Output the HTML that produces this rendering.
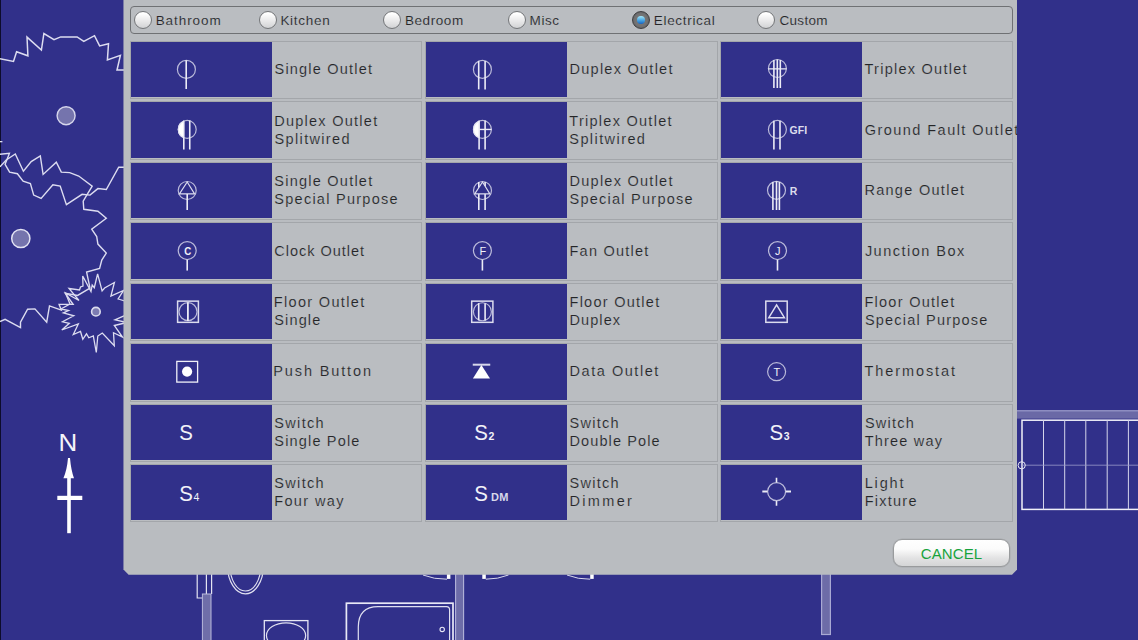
<!DOCTYPE html>
<html lang="en"><head><meta charset="utf-8"><title>Electrical symbols</title>
<style>

html,body{margin:0;padding:0}
body{width:1138px;height:640px;overflow:hidden;position:relative;background:#31308a;
 font-family:"Liberation Sans",sans-serif;}
#bg{position:absolute;left:0;top:0;width:1138px;height:640px;display:block}
#dlg{position:absolute;left:123px;top:-12px;width:894.2px;height:586.7px;background:#b9bcc0;
 clip-path:polygon(.45px 0,100% 0,100% calc(100% - 5.2px),calc(100% - 5.2px) 100%,5.6px 100%,.45px calc(100% - 5.2px));}
#in{position:absolute;left:-123px;top:12px;width:1138px;height:640px}
#tabs{position:absolute;left:130px;top:6px;width:881px;height:26px;border:1px solid #6f7174;border-radius:4px;
 background:#babdc1}
.rb{position:absolute;top:3.5px;width:16.4px;height:16.4px;border-radius:50%;border:1px solid #747679;
 background:linear-gradient(#ffffff 10%,#e9e9ea 55%,#d2d3d5);}
.rb.on{border-color:#3e3e40;background:radial-gradient(circle at 50% 50%,#7c7c7d 0,#727273 55%,#525254 100%)}
.rb.on i{position:absolute;left:4.4px;top:4.4px;width:7.8px;height:7.8px;border-radius:50%;
 background:linear-gradient(#a6e8f8,#3e9de0 60%,#1a63c0)}
.rl{position:absolute;top:6px;font-size:13.5px;line-height:16px;color:#242527;white-space:nowrap;-webkit-text-stroke:.15px #babdc1}
.cell{position:absolute;border:1px solid #a3a6aa;background:#babdc1;box-sizing:content-box}
.cell svg{position:absolute;left:0;top:0;display:block;background:#31308a}
.cell span{position:absolute;font-size:14.5px;line-height:18px;color:#242527;white-space:nowrap;-webkit-text-stroke:.18px #babdc1}
#cancel{position:absolute;left:893px;top:539px;width:115px;height:26px;border:1px solid #999b9d;border-radius:9px;
 background:linear-gradient(#ffffff 0,#fbfbfb 35%,#e2e2e3 70%,#d4d5d6 100%);color:#17a33c;font-size:15px;line-height:27px;
 text-align:center;letter-spacing:.1px;box-shadow:0 0 0 .5px rgba(120,120,120,.25)}

</style></head><body>
<svg id="bg" width="1138" height="640" viewBox="0 0 1138 640">
<rect x="0" y="0" width="1" height="640" fill="#0d0c2c"/>
<rect x="0" y="141" width="2.4" height="1.3" fill="#e0e0f0"/>
<polyline points="0,58.8 13.5,61.4 16.6,51.7 27.9,55.8 27,37.1 41.4,50.1 43.9,33.5 54,39.7 60.7,36.9 77.1,36.9 83.8,41.4 94.5,35.7 99.6,45.9 108.5,43.8 107.4,59.9 120.4,55.4 117,70.1 124,70.1" fill="none" stroke="#dcdcf0" stroke-width="1.5" stroke-linejoin="miter" stroke-linecap="butt" opacity="1"/>
<polyline points="0,166.9 6.2,160 15.3,154 23.4,171.2 31.2,161.6 40.3,155.9 43.1,174.4 56.3,162.2 61.3,172.1 69.7,172.6 78.7,176 92.2,186.1 86.6,195.3 83.2,201.2 83.8,209.3 97.9,211.2 106.3,218.3 91.7,229.2 96.7,236.5 97.9,244.1 106.3,253.1 101.8,260 99.6,268.4 86.6,272.1 90,288.2 77.6,295.4 65.2,293.2 73.1,304.4 59.1,304.4 61.3,310.1 49.5,305.9 46.7,322.2 34.9,308.9 27.6,309.2 20.5,322.1 20.5,327.5 5.1,319.3 0,321.6" fill="none" stroke="#dcdcf0" stroke-width="1.4" stroke-linejoin="miter" stroke-linecap="butt" opacity="1"/>
<polyline points="0,154.2 9.4,153.4 5.6,163.1 5.1,164.4 9.6,172.1 17.4,173.7 23.1,181.1 30.4,183.6 33.7,195.1 41.1,198.5 52.9,184.8 60.2,186.1 66.4,204.7 82.1,194.3 90,195.1 97.9,188.6 106.3,189.5 118.7,167.2 124,167.2" fill="none" stroke="#dcdcf0" stroke-width="1.4" stroke-linejoin="miter" stroke-linecap="butt" opacity="1"/>
<circle cx="66.1" cy="115.7" r="9" fill="#7574ad" stroke="#d6d6ec" stroke-width="1.4"/>
<circle cx="20.8" cy="238.5" r="9.1" fill="#7574ad" stroke="#e2e2f2" stroke-width="1.5"/>
<polygon points="97.6,273.9 102.1,290.9 104.6,288 114.4,282.5 110.9,296.2 123.5,290.5 118.1,299 128,302 128,314 115,319.8 127,322.5 114.3,325.5 122.5,337 113.5,332.7 114.3,345.8 102.3,333 97.8,336 96.3,352.5 93.3,336 88.8,337.8 86.5,333.8 82.8,339.3 80.5,331.5 73.3,334.5 78.3,324 61.8,330 69.3,323.3 62.5,321.8 73.8,315.8 63.3,312.8 68.5,310.5 61,309 70,304 65.5,293 79,300.5 69,288.5 79.5,290 80.5,287 83,286 82.7,276 91,291.6 92.2,285 94.3,287.7" fill="none" stroke="#dcdcf0" stroke-width="1.3" stroke-linejoin="miter" stroke-linecap="butt" opacity="1"/>
<circle cx="95.9" cy="311.7" r="4.3" fill="#7c7bb2" stroke="#dcdcee" stroke-width="1.6"/>
<text x="58.6" y="450.8" font-family="Liberation Sans, sans-serif" font-size="23.5" fill="#f4f4fa" textLength="18.75" lengthAdjust="spacingAndGlyphs">N</text>
<rect x="67.2" y="474" width="3.6" height="59.2" fill="#ffffff"/>
<path d="M68 458 L70 458 Q71 470 74 478.2 L63.4 478.2 Q67 470 68 458 Z" fill="#ffffff"/>
<rect x="57.3" y="495.8" width="25" height="4.2" fill="#ffffff"/>
<path d="M197.2 570 V598 H202.4 M206.4 570 V594 M211.6 570 V594" fill="none" stroke="#e4e4f2" stroke-width="1.2"/>
<rect x="202.4" y="594" width="8.6" height="50" fill="#6f6ea9" stroke="#b9b9dc" stroke-width="1"/>
<ellipse cx="245.5" cy="566" rx="17.9" ry="27.8" fill="none" stroke="#e0e0f0" stroke-width="1.2"/>
<ellipse cx="245.4" cy="566" rx="15.4" ry="25" fill="none" stroke="#e0e0f0" stroke-width="1.1"/>
<rect x="264.3" y="620.6" width="43.6" height="30" fill="none" stroke="#e6e6f4" stroke-width="1.3"/>
 <ellipse cx="286.05" cy="635.6" rx="19.6" ry="12.7" fill="none" stroke="#e0e0f0" stroke-width="1.2"/>
<rect x="346.4" y="603.2" width="106.6" height="50" fill="none" stroke="#e8e8f6" stroke-width="1.7"/>
<path d="M358.3 650 V627 Q358.3 606.6 378 606.6 H446.5 Q449.6 606.6 449.6 610 V650" fill="none" stroke="#e0e0f0" stroke-width="1.2"/>
<circle cx="442.2" cy="629.4" r="2.2" fill="none" stroke="#e8e8f6" stroke-width="1.1"/>
<rect x="455.6" y="570" width="8" height="80" fill="#6d6ca8" stroke="#b4b4da" stroke-width="1.1"/>
<path d="M423 575 Q434 579.4 447 579.2" fill="none" stroke="#d8d8ec" stroke-width="1"/>
<rect x="446.9" y="570" width="3.5" height="8.9" fill="#ffffff"/>
<rect x="482.3" y="570" width="3.5" height="8.9" fill="#ffffff"/>
<path d="M485.8 579.2 Q498 579.2 508.5 575" fill="none" stroke="#d8d8ec" stroke-width="1"/>
<path d="M567 575 Q578 579.4 590.2 579.2" fill="none" stroke="#d8d8ec" stroke-width="1"/>
<rect x="590.2" y="570" width="3.5" height="8.9" fill="#ffffff"/>
<rect x="821.6" y="570" width="8.8" height="64.5" fill="#6d6ca8" stroke="#a9a9d4" stroke-width="1.2"/>
<rect x="1010" y="410.2" width="130" height="8.4" fill="#6a69a6"/>
<rect x="1010" y="410.2" width="130" height="1.2" fill="#9a9aca"/>
<rect x="1022" y="420.2" width="120" height="89.2" fill="none" stroke="#f0f0f8" stroke-width="1.5"/>
<line x1="1043.5" y1="420" x2="1043.5" y2="509.4" stroke="#d4d4ea" stroke-width="1"/>
<line x1="1064.7" y1="420" x2="1064.7" y2="509.4" stroke="#d4d4ea" stroke-width="1"/>
<line x1="1085.8" y1="420" x2="1085.8" y2="509.4" stroke="#d4d4ea" stroke-width="1"/>
<line x1="1107.2" y1="420" x2="1107.2" y2="509.4" stroke="#d4d4ea" stroke-width="1"/>
<line x1="1128.4" y1="420" x2="1128.4" y2="509.4" stroke="#d4d4ea" stroke-width="1"/>
<line x1="1022" y1="465.2" x2="1138" y2="465.2" stroke="#9c9cca" stroke-width=".8"/>
<circle cx="1021.7" cy="465.3" r="3.6" fill="none" stroke="#e6e6f4" stroke-width="1"/>
</svg>
<div id="dlg"><div id="in">
<div id="tabs">
<div class="rb" style="left:3px"></div>
<div class="rl" style="left:24.7px;letter-spacing:0.93px">Bathroom</div>
<div class="rb" style="left:127.9px"></div>
<div class="rl" style="left:149.4px;letter-spacing:0.71px">Kitchen</div>
<div class="rb" style="left:252px"></div>
<div class="rl" style="left:273.9px;letter-spacing:0.59px">Bedroom</div>
<div class="rb" style="left:376.5px"></div>
<div class="rl" style="left:398.6px;letter-spacing:0.54px">Misc</div>
<div class="rb on" style="left:501.1px"><i></i></div>
<div class="rl" style="left:522.8px;letter-spacing:0.68px">Electrical</div>
<div class="rb" style="left:625.6px"></div>
<div class="rl" style="left:648.5px;letter-spacing:0.29px">Custom</div>
</div>
<div class="cell" style="left:130px;top:41px;width:290px;height:56.4px">
<svg width="141" height="55.4" viewBox="131 42.1 141 55.4">
<circle cx="186.4" cy="69.5" r="9" fill="none" stroke="#dcdcee" stroke-width="1.2" opacity=".8"/>
<line x1="186.2" y1="60.3" x2="186.2" y2="89" stroke="#ececf6" stroke-width="1.6"/>
</svg>
<span style="left:143.5px;top:18.3px;letter-spacing:1.21px;word-spacing:0px">Single Outlet</span>
</div>
<div class="cell" style="left:425px;top:41px;width:290.5px;height:56.4px">
<svg width="141" height="55.4" viewBox="426 42.1 141 55.4">
<circle cx="482.4" cy="69.5" r="9" fill="none" stroke="#dcdcee" stroke-width="1.2" opacity=".8"/>
<line x1="478.7" y1="61" x2="478.7" y2="89.5" stroke="#ececf6" stroke-width="1.6"/>
<line x1="485.1" y1="61" x2="485.1" y2="89.5" stroke="#ececf6" stroke-width="1.6"/>
</svg>
<span style="left:143.5px;top:18.3px;letter-spacing:1.26px;word-spacing:0px">Duplex Outlet</span>
</div>
<div class="cell" style="left:720px;top:41px;width:291px;height:56.4px">
<svg width="141" height="55.4" viewBox="721 42.1 141 55.4">
<circle cx="777.4" cy="68.6" r="9" fill="none" stroke="#dcdcee" stroke-width="1.2" opacity=".8"/>
<line x1="773.9" y1="60" x2="773.9" y2="88" stroke="#ececf6" stroke-width="1.6"/>
<line x1="777.3" y1="59.5" x2="777.3" y2="88" stroke="#ececf6" stroke-width="1.6"/>
<line x1="780.3" y1="60" x2="780.3" y2="88" stroke="#ececf6" stroke-width="1.6"/>
<line x1="768.2" y1="69" x2="786.6" y2="69" stroke="#ececf6" stroke-width="1.4"/>
</svg>
<span style="left:143.5px;top:18.3px;letter-spacing:1.26px;word-spacing:0px">Triplex Outlet</span>
</div>
<div class="cell" style="left:130px;top:101.44px;width:290px;height:56.4px">
<svg width="141" height="55.4" viewBox="131 102.54 141 55.4">
<path d="M184 121.16 A9.4 9.4 0 0 0 184 138.84 Z" fill="#ffffff"/>
<circle cx="187.2" cy="130" r="9" fill="none" stroke="#dcdcee" stroke-width="1.2" opacity=".8"/>
<line x1="183.8" y1="121.4" x2="183.8" y2="150" stroke="#ececf6" stroke-width="1.6"/>
<line x1="189.75" y1="121" x2="189.75" y2="150" stroke="#ececf6" stroke-width="1.6"/>
</svg>
<span style="left:143.2px;top:9.4px;letter-spacing:1.26px;word-spacing:0px">Duplex Outlet</span>
<span style="left:143.6px;top:27.2px;letter-spacing:1.34px;word-spacing:0px">Splitwired</span>
</div>
<div class="cell" style="left:425px;top:101.44px;width:290.5px;height:56.4px">
<svg width="141" height="55.4" viewBox="426 102.54 141 55.4">
<path d="M479.3 121.13 A9.4 9.4 0 0 0 479.3 138.87 Z" fill="#ffffff"/>
<circle cx="482.4" cy="130" r="9" fill="none" stroke="#dcdcee" stroke-width="1.2" opacity=".8"/>
<line x1="479.1" y1="121.4" x2="479.1" y2="150" stroke="#ececf6" stroke-width="1.6"/>
<line x1="485.1" y1="121" x2="485.1" y2="150" stroke="#ececf6" stroke-width="1.6"/>
<line x1="479.1" y1="130" x2="491.6" y2="130" stroke="#ececf6" stroke-width="1.4"/>
</svg>
<span style="left:143.3px;top:9.4px;letter-spacing:1.27px;word-spacing:0px">Triplex Outlet</span>
<span style="left:143.3px;top:27.2px;letter-spacing:1.42px;word-spacing:0px">Splitwired</span>
</div>
<div class="cell" style="left:720px;top:101.44px;width:291px;height:56.4px">
<svg width="141" height="55.4" viewBox="721 102.54 141 55.4">
<circle cx="777.4" cy="130" r="9" fill="none" stroke="#dcdcee" stroke-width="1.2" opacity=".8"/>
<line x1="773.9" y1="121.4" x2="773.9" y2="150" stroke="#ececf6" stroke-width="1.6"/>
<line x1="780" y1="121.4" x2="780" y2="150" stroke="#ececf6" stroke-width="1.6"/>
<text x="789.6" y="134.4" font-family="Liberation Sans, sans-serif" font-size="10.5" font-weight="bold" fill="#dcdcec" text-anchor="start">GFI</text>
</svg>
<span style="left:143.7px;top:18.3px;letter-spacing:1.46px;word-spacing:0px">Ground Fault Outlet</span>
</div>
<div class="cell" style="left:130px;top:161.88px;width:290px;height:56.4px">
<svg width="141" height="55.4" viewBox="131 162.98 141 55.4">
<circle cx="187.2" cy="190.5" r="9" fill="none" stroke="#dcdcee" stroke-width="1.2" opacity=".8"/>
<polygon points="187.2,182 179.4,193.9 194.6,193.9" fill="none" stroke="#dcdcee" stroke-width="1.2" stroke-linejoin="miter"/>
<line x1="187.2" y1="194" x2="187.2" y2="210" stroke="#ececf6" stroke-width="1.6"/>
</svg>
<span style="left:143.3px;top:9.4px;letter-spacing:1.24px;word-spacing:0px">Single Outlet</span>
<span style="left:143.3px;top:27.2px;letter-spacing:1.26px;word-spacing:0px">Special Purpose</span>
</div>
<div class="cell" style="left:425px;top:161.88px;width:290.5px;height:56.4px">
<svg width="141" height="55.4" viewBox="426 162.98 141 55.4">
<circle cx="482.5" cy="190.5" r="9" fill="none" stroke="#dcdcee" stroke-width="1.2" opacity=".8"/>
<line x1="478.8" y1="182" x2="478.8" y2="210" stroke="#ececf6" stroke-width="1.6"/>
<line x1="485.1" y1="182" x2="485.1" y2="210" stroke="#ececf6" stroke-width="1.6"/>
<polygon points="482.5,182 474.7,193.9 489.9,193.9" fill="#31308a" stroke="#dcdcee" stroke-width="1.2" stroke-linejoin="miter"/>
</svg>
<span style="left:143.5px;top:9.4px;letter-spacing:1.26px;word-spacing:0px">Duplex Outlet</span>
<span style="left:143.5px;top:27.2px;letter-spacing:1.25px;word-spacing:0px">Special Purpose</span>
</div>
<div class="cell" style="left:720px;top:161.88px;width:291px;height:56.4px">
<svg width="141" height="55.4" viewBox="721 162.98 141 55.4">
<circle cx="776.5" cy="190.3" r="9" fill="none" stroke="#dcdcee" stroke-width="1.2" opacity=".8"/>
<line x1="772.9" y1="182" x2="772.9" y2="210" stroke="#ececf6" stroke-width="1.6"/>
<line x1="776.5" y1="181.3" x2="776.5" y2="210" stroke="#ececf6" stroke-width="1.6"/>
<line x1="779.4" y1="182" x2="779.4" y2="210" stroke="#ececf6" stroke-width="1.6"/>
<text x="789.7" y="194.7" font-family="Liberation Sans, sans-serif" font-size="10.5" font-weight="bold" fill="#dcdcec" text-anchor="start">R</text>
</svg>
<span style="left:143.4px;top:18.3px;letter-spacing:1.29px;word-spacing:0px">Range Outlet</span>
</div>
<div class="cell" style="left:130px;top:222.32px;width:290px;height:56.4px">
<svg width="141" height="55.4" viewBox="131 223.42 141 55.4">
<circle cx="187.2" cy="251" r="9" fill="none" stroke="#dcdcee" stroke-width="1.2" opacity=".8"/>
<line x1="187.2" y1="260.2" x2="187.2" y2="271" stroke="#ececf6" stroke-width="1.6"/>
<text textLength="7" lengthAdjust="spacingAndGlyphs" x="187.7" y="255.2" font-family="Liberation Sans, sans-serif" font-size="11" font-weight="bold" fill="#f2f2f8" text-anchor="middle">C</text>
</svg>
<span style="left:143.3px;top:18.3px;letter-spacing:0.98px;word-spacing:0px">Clock Outlet</span>
</div>
<div class="cell" style="left:425px;top:222.32px;width:290.5px;height:56.4px">
<svg width="141" height="55.4" viewBox="426 223.42 141 55.4">
<circle cx="482.4" cy="251" r="9" fill="none" stroke="#dcdcee" stroke-width="1.2" opacity=".8"/>
<line x1="482.4" y1="260.2" x2="482.4" y2="271" stroke="#ececf6" stroke-width="1.6"/>
<text x="482.8" y="255" font-family="Liberation Sans, sans-serif" font-size="11" font-weight="normal" fill="#f2f2f8" text-anchor="middle">F</text>
</svg>
<span style="left:143.5px;top:18.3px;letter-spacing:1.24px;word-spacing:0px">Fan Outlet</span>
</div>
<div class="cell" style="left:720px;top:222.32px;width:291px;height:56.4px">
<svg width="141" height="55.4" viewBox="721 223.42 141 55.4">
<circle cx="777.5" cy="251" r="9" fill="none" stroke="#dcdcee" stroke-width="1.2" opacity=".8"/>
<line x1="777.5" y1="260.2" x2="777.5" y2="271" stroke="#ececf6" stroke-width="1.6"/>
<text x="777.8" y="255" font-family="Liberation Sans, sans-serif" font-size="11" font-weight="normal" fill="#f2f2f8" text-anchor="middle">J</text>
</svg>
<span style="left:143.9px;top:18.3px;letter-spacing:1.48px;word-spacing:0px">Junction Box</span>
</div>
<div class="cell" style="left:130px;top:282.76px;width:290px;height:56.4px">
<svg width="141" height="55.4" viewBox="131 283.86 141 55.4">
<rect x="177.6" y="301" width="20.8" height="21.2" fill="none" stroke="#dcdcee" stroke-width="1.5"/>
<circle cx="188" cy="311.5" r="9" fill="none" stroke="#dcdcee" stroke-width="1.2" opacity=".8"/>
<line x1="187.9" y1="302.2" x2="187.9" y2="320.8" stroke="#ececf6" stroke-width="1.8"/>
</svg>
<span style="left:142.8px;top:9.4px;letter-spacing:1.33px;word-spacing:0px">Floor Outlet</span>
<span style="left:143.3px;top:27.2px;letter-spacing:1.13px;word-spacing:0px">Single</span>
</div>
<div class="cell" style="left:425px;top:282.76px;width:290.5px;height:56.4px">
<svg width="141" height="55.4" viewBox="426 283.86 141 55.4">
<rect x="471.7" y="301" width="21.2" height="21.2" fill="none" stroke="#dcdcee" stroke-width="1.5"/>
<circle cx="482.4" cy="311.6" r="9" fill="none" stroke="#dcdcee" stroke-width="1.2" opacity=".8"/>
<line x1="478.7" y1="303" x2="478.7" y2="320.2" stroke="#ececf6" stroke-width="1.6"/>
<line x1="485.1" y1="303" x2="485.1" y2="320.2" stroke="#ececf6" stroke-width="1.6"/>
</svg>
<span style="left:143.5px;top:9.4px;letter-spacing:1.27px;word-spacing:0px">Floor Outlet</span>
<span style="left:143.5px;top:27.2px;letter-spacing:1.08px;word-spacing:0px">Duplex</span>
</div>
<div class="cell" style="left:720px;top:282.76px;width:291px;height:56.4px">
<svg width="141" height="55.4" viewBox="721 283.86 141 55.4">
<rect x="765.8" y="301" width="21.4" height="21.2" fill="none" stroke="#dcdcee" stroke-width="1.5"/>
<polygon points="776.6,304.8 768.8,317.6 784.4,317.6" fill="none" stroke="#dcdcee" stroke-width="1.5" stroke-linejoin="miter"/>
</svg>
<span style="left:143.4px;top:9.4px;letter-spacing:1.28px;word-spacing:0px">Floor Outlet</span>
<span style="left:143.9px;top:27.2px;letter-spacing:1.2px;word-spacing:0px">Special Purpose</span>
</div>
<div class="cell" style="left:130px;top:343.2px;width:290px;height:56.4px">
<svg width="141" height="55.4" viewBox="131 344.3 141 55.4">
<rect x="176.8" y="361.7" width="20.8" height="20.7" fill="none" stroke="#f0f0f8" stroke-width="1.3"/>
<circle cx="187.1" cy="371.9" r="5.1" fill="#ffffff"/>
</svg>
<span style="left:142.3px;top:18.3px;letter-spacing:1.87px;word-spacing:0px">Push Button</span>
</div>
<div class="cell" style="left:425px;top:343.2px;width:290.5px;height:56.4px">
<svg width="141" height="55.4" viewBox="426 344.3 141 55.4">
<rect x="472.75" y="364" width="17.5" height="2" fill="#d6d6ea"/>
<polygon points="481.4,365.2 472.9,378.9 490,378.9" fill="#ffffff"/>
</svg>
<span style="left:143.5px;top:18.3px;letter-spacing:1.55px;word-spacing:0px">Data Outlet</span>
</div>
<div class="cell" style="left:720px;top:343.2px;width:291px;height:56.4px">
<svg width="141" height="55.4" viewBox="721 344.3 141 55.4">
<circle cx="776.6" cy="372" r="9" fill="none" stroke="#dcdcee" stroke-width="1.2" opacity=".8"/>
<text x="776.9" y="375.9" font-family="Liberation Sans, sans-serif" font-size="11" font-weight="normal" fill="#f2f2f8" text-anchor="middle">T</text>
</svg>
<span style="left:143.5px;top:18.3px;letter-spacing:1.91px;word-spacing:0px">Thermostat</span>
</div>
<div class="cell" style="left:130px;top:403.64px;width:290px;height:56.4px">
<svg width="141" height="55.4" viewBox="131 404.74 141 55.4">
<text textLength="13.65" lengthAdjust="spacingAndGlyphs" x="179.3" y="439.8" font-family="Liberation Sans, sans-serif" font-size="22" font-weight="normal" fill="#f2f2f8" text-anchor="start">S</text>
</svg>
<span style="left:143.3px;top:9.4px;letter-spacing:1.33px;word-spacing:0px">Switch</span>
<span style="left:143.3px;top:27.2px;letter-spacing:1.17px;word-spacing:0px">Single Pole</span>
</div>
<div class="cell" style="left:425px;top:403.64px;width:290.5px;height:56.4px">
<svg width="141" height="55.4" viewBox="426 404.74 141 55.4">
<text textLength="13.65" lengthAdjust="spacingAndGlyphs" x="474.3" y="439.8" font-family="Liberation Sans, sans-serif" font-size="22" font-weight="normal" fill="#f2f2f8" text-anchor="start">S</text>
<text x="488.6" y="439.8" font-family="Liberation Sans, sans-serif" font-size="10.5" font-weight="bold" fill="#f2f2f8" text-anchor="start">2</text>
</svg>
<span style="left:143.5px;top:9.4px;letter-spacing:1.29px;word-spacing:0px">Switch</span>
<span style="left:143.5px;top:27.2px;letter-spacing:1.11px;word-spacing:0px">Double Pole</span>
</div>
<div class="cell" style="left:720px;top:403.64px;width:291px;height:56.4px">
<svg width="141" height="55.4" viewBox="721 404.74 141 55.4">
<text textLength="13.65" lengthAdjust="spacingAndGlyphs" x="769.45" y="439.8" font-family="Liberation Sans, sans-serif" font-size="22" font-weight="normal" fill="#f2f2f8" text-anchor="start">S</text>
<text x="783.7" y="439.8" font-family="Liberation Sans, sans-serif" font-size="10.5" font-weight="bold" fill="#f2f2f8" text-anchor="start">3</text>
</svg>
<span style="left:143.9px;top:9.4px;letter-spacing:1.25px;word-spacing:0px">Switch</span>
<span style="left:143.7px;top:27.2px;letter-spacing:1.2px;word-spacing:0px">Three way</span>
</div>
<div class="cell" style="left:130px;top:464.08px;width:290px;height:56.4px">
<svg width="141" height="55.4" viewBox="131 465.18 141 55.4">
<text textLength="13.65" lengthAdjust="spacingAndGlyphs" x="179.3" y="500.9" font-family="Liberation Sans, sans-serif" font-size="22" font-weight="normal" fill="#f2f2f8" text-anchor="start">S</text>
<text x="193.4" y="500.9" font-family="Liberation Sans, sans-serif" font-size="10.5" font-weight="normal" fill="#f2f2f8" text-anchor="start">4</text>
</svg>
<span style="left:143.3px;top:9.4px;letter-spacing:1.33px;word-spacing:0px">Switch</span>
<span style="left:143.2px;top:27.2px;letter-spacing:1.38px;word-spacing:0px">Four way</span>
</div>
<div class="cell" style="left:425px;top:464.08px;width:290.5px;height:56.4px">
<svg width="141" height="55.4" viewBox="426 465.18 141 55.4">
<text textLength="13.65" lengthAdjust="spacingAndGlyphs" x="474.3" y="500.9" font-family="Liberation Sans, sans-serif" font-size="22" font-weight="normal" fill="#f2f2f8" text-anchor="start">S</text>
<text letter-spacing=".4" x="490.9" y="500.9" font-family="Liberation Sans, sans-serif" font-size="11" font-weight="bold" fill="#d8d8ea" text-anchor="start">DM</text>
</svg>
<span style="left:143.5px;top:9.4px;letter-spacing:1.29px;word-spacing:0px">Switch</span>
<span style="left:143.5px;top:27.2px;letter-spacing:2.32px;word-spacing:0px">Dimmer</span>
</div>
<div class="cell" style="left:720px;top:464.08px;width:291px;height:56.4px">
<svg width="141" height="55.4" viewBox="721 465.18 141 55.4">
<circle cx="776.6" cy="491.8" r="9" fill="none" stroke="#dcdcee" stroke-width="1.2" opacity=".8"/>
<line x1="776.5" y1="478" x2="776.5" y2="482.6" stroke="#ececf6" stroke-width="1.6"/>
<line x1="776.5" y1="501" x2="776.5" y2="506" stroke="#ececf6" stroke-width="1.6"/>
<line x1="762.3" y1="491.8" x2="767.4" y2="491.8" stroke="#ececf6" stroke-width="2"/>
<line x1="785.8" y1="491.8" x2="791" y2="491.8" stroke="#ececf6" stroke-width="2"/>
</svg>
<span style="left:143.7px;top:9.4px;letter-spacing:1.85px;word-spacing:0px">Light</span>
<span style="left:143.7px;top:27.2px;letter-spacing:1.24px;word-spacing:0px">Fixture</span>
</div>
<div id="cancel">CANCEL</div>
</div></div>
</body></html>
